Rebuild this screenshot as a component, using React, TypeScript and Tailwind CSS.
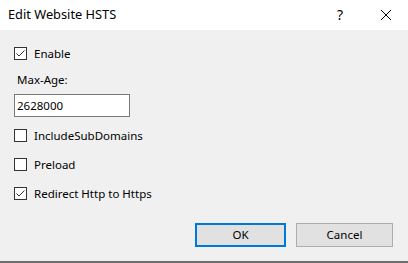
import React from "react";

function Box({ checked }: { checked?: boolean }) {
  return (
    <div className="w-[13px] h-[13px] border border-[#333333] bg-white flex-none relative">
      {checked && (
        <svg width="11" height="11" viewBox="0 0 11 11" className="absolute left-0 top-0">
          <path d="M1.5 5.5 L4 8 L9.5 2.5" fill="none" stroke="#333333" strokeWidth="1" />
        </svg>
      )}
    </div>
  );
}

function Check({ label, checked, className }: { label: string; checked?: boolean; className?: string }) {
  return (
    <div className={"flex items-center h-[13px] gap-[7px] " + (className ?? "")}>
      <Box checked={checked} />
      <span className="text-[11.5px] leading-[16px] text-black">{label}</span>
    </div>
  );
}

export default function App() {
  return (
    <div className="w-[408px] h-[263px] flex flex-col bg-white select-none font-['Noto_Sans',sans-serif]">
      <div className="h-[30px] flex items-center bg-white flex-none">
        <span className="ml-[8px] text-[12.8px] text-black">Edit Website HSTS</span>
        <span className="ml-auto mr-[37px] text-[14px] text-black leading-none">?</span>
        <svg width="12" height="12" viewBox="0 0 12 12" className="mr-[16px]">
          <path d="M1 1 L11 11 M11 1 L1 11" stroke="#000" strokeWidth="1" />
        </svg>
      </div>
      <div className="h-[233px] bg-[#f0f0f0] border-b-2 border-[#6e6e6e] flex flex-col pl-[14px] pt-[17px]">
        <Check label="Enable" checked />
        <div className="mt-[12px] ml-[3px] text-[11.5px] leading-[16px] text-black">Max-Age:</div>
        <div className="mt-[6px] w-[116px] h-[23px] border border-[#7a7a7a] bg-white flex items-center pl-[2px] text-[11.5px] text-black">
          2628000
        </div>
        <Check label="IncludeSubDomains" className="mt-[12px]" />
        <Check label="Preload" className="mt-[16px]" />
        <Check label="Redirect Http to Https" checked className="mt-[16px]" />
        <div className="mt-[23px] flex justify-end pr-[15px] gap-[10px]">
          <button className="w-[91px] h-[24px] bg-[#e1e1e1] border-2 border-[#0078d7] text-[11.5px] text-black">OK</button>
          <button className="w-[97px] h-[24px] bg-[#e1e1e1] border border-[#adadad] text-[11.5px] text-black">Cancel</button>
        </div>
      </div>
    </div>
  );
}
